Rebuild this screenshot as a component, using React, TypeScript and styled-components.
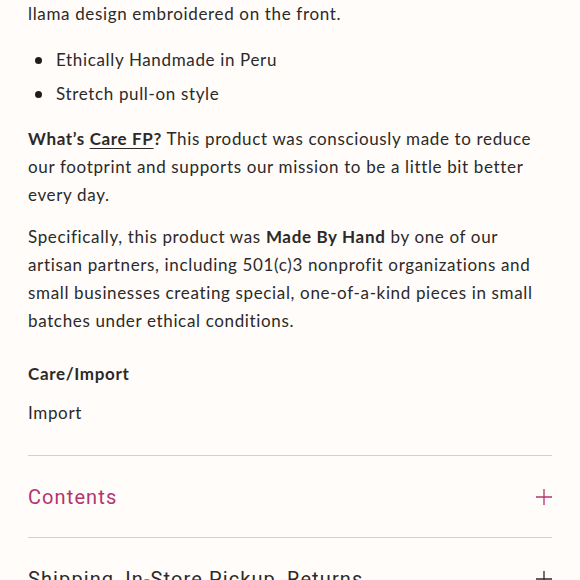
import styled, { createGlobalStyle } from "styled-components";

const GlobalStyle = createGlobalStyle`
  html, body {
    margin: 0;
    padding: 0;
    background: #fffcfa;
  }
  body {
    font-family: "Lato", "Liberation Sans", sans-serif;
    color: #2b2a29;
  }
`;

const Page = styled.div`
  padding: 0 28px;
  width: 580px;
  box-sizing: border-box;
`;

const Text = styled.p<{ $gap?: number }>`
  margin: 0 0 ${(p) => p.$gap ?? 16}px;
  font-size: 17px;
  line-height: 28px;
  letter-spacing: 0.65px;
`;

const List = styled.ul`
  list-style: none;
  margin: 0 0 17px;
  padding: 0;
`;

const Item = styled.li`
  position: relative;
  padding-left: 28px;
  font-size: 17px;
  line-height: 28px;
  letter-spacing: 0.65px;
  margin-bottom: 6px;

  &::before {
    content: "";
    position: absolute;
    left: 7px;
    top: 11px;
    width: 7px;
    height: 7px;
    border-radius: 50%;
    background: #1e1d1c;
  }
`;

const Strong = styled.strong`
  font-weight: 700;
`;

const Link = styled.a`
  color: inherit;
  text-decoration: underline;
  text-underline-offset: 3px;
`;

const SubHeading = styled.h4`
  margin: 25px 0 11px;
  font-size: 17px;
  line-height: 28px;
  font-weight: 700;
  letter-spacing: 0.65px;
`;

const Accordion = styled.div`
  margin-top: 28px;
  border-top: 1px solid #d3d0ce;
`;

const Row = styled.div<{ $active?: boolean }>`
  display: flex;
  align-items: center;
  justify-content: space-between;
  height: 81px;
  border-bottom: 1px solid #d3d0ce;
  font-family: "Roboto", "Liberation Sans", sans-serif;
  font-size: 20px;
  letter-spacing: 1.1px;
  color: ${(p) => (p.$active ? "#b3346f" : "#2b2a29")};
`;

const Plus = ({ color }: { color: string }) => (
  <svg width="16" height="16" viewBox="0 0 16 16">
    <path d="M8 0v16M0 8h16" stroke={color} strokeWidth="1.3" fill="none" />
  </svg>
);

export default function App() {
  return (
    <>
      <GlobalStyle />
      <Page>
        <Text $gap={18}>llama design embroidered on the front.</Text>
        <List>
          <Item>Ethically Handmade in Peru</Item>
          <Item>Stretch pull-on style</Item>
        </List>
        <Text $gap={14}>
          <Strong>
            What’s <Link href="#">Care FP</Link>?
          </Strong>{" "}
          This product was consciously made to reduce our footprint and supports
          our mission to be a little bit better every day.
        </Text>
        <Text>
          Specifically, this product was <Strong>Made By Hand</Strong> by one of
          our artisan partners, including 501(c)3 nonprofit organizations and
          small businesses creating special, one-of-a-kind pieces in small
          batches under ethical conditions.
        </Text>
        <SubHeading>Care/Import</SubHeading>
        <Text>Import</Text>
        <Accordion>
          <Row $active>
            <span>Contents</span>
            <Plus color="#b3346f" />
          </Row>
          <Row>
            <span>Shipping, In-Store Pickup, Returns</span>
            <Plus color="#2b2a29" />
          </Row>
        </Accordion>
      </Page>
    </>
  );
}
